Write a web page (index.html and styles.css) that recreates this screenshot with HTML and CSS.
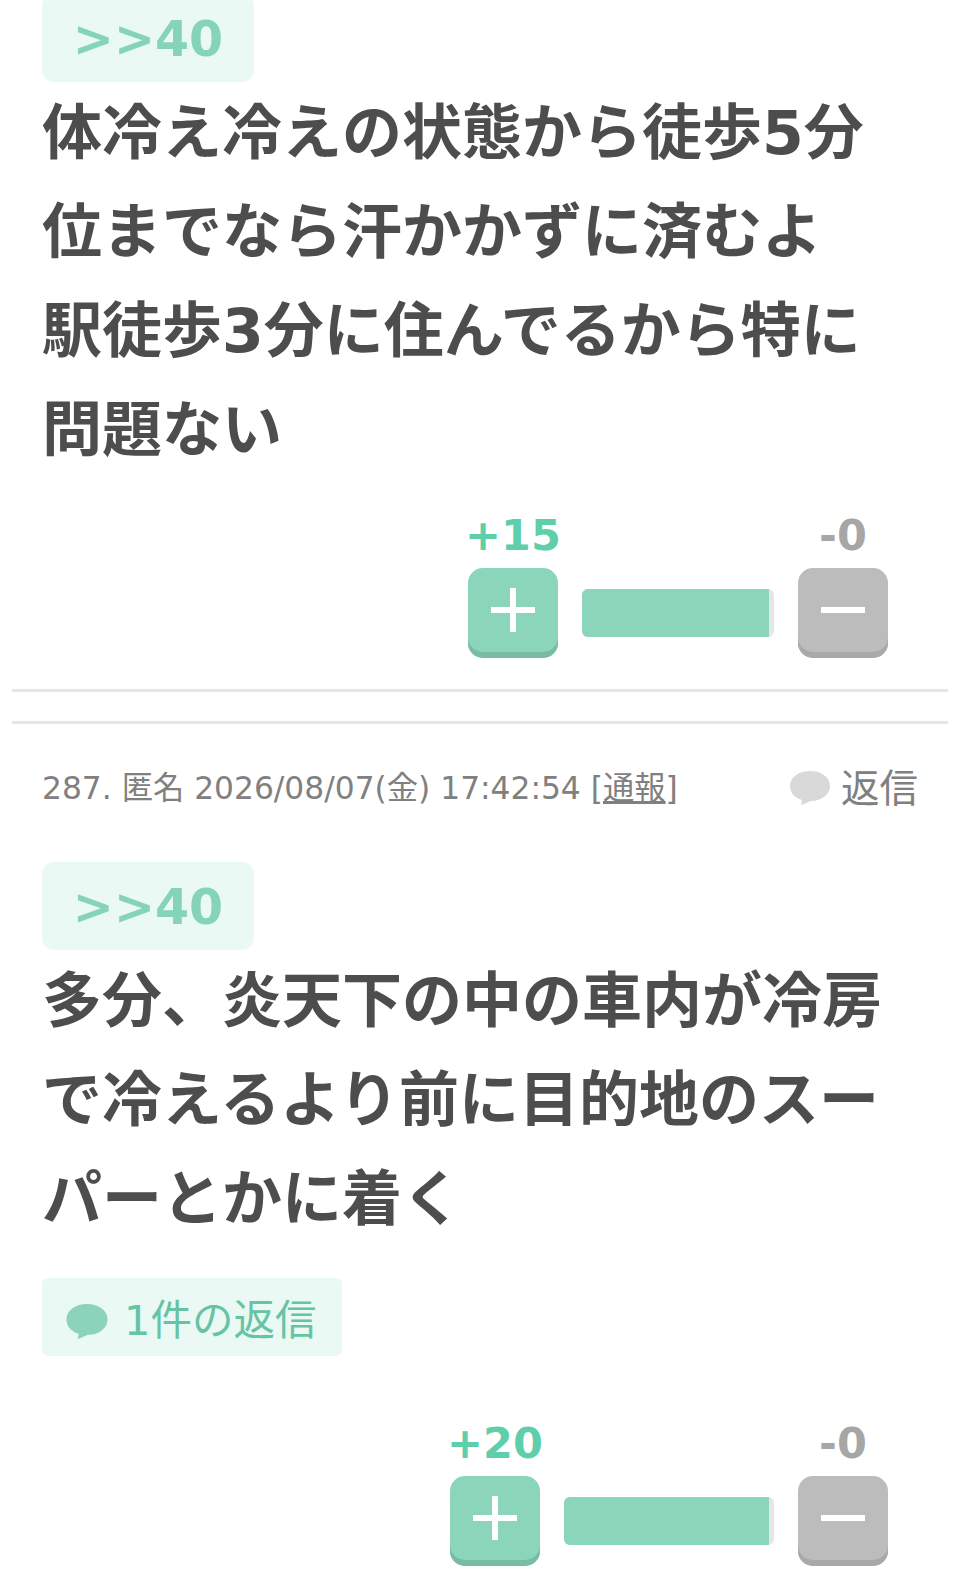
FILE: index.html
```html
<!DOCTYPE html>
<html lang="ja">
<head>
  <meta charset="UTF-8" />
  <meta name="viewport" content="width=device-width, initial-scale=1" />
  <title>コメント</title>
  <link rel="stylesheet" href="styles.css">
</head>
<body>

  <div class="comments">
    <article class="comment comment-cut">
      <a class="anchor">&gt;&gt;40</a>
      <p class="text">体冷え冷えの状態から徒歩5分位までなら汗かかずに済むよ<br>駅徒歩3分に住んでるから特に問題ない</p>
      <div class="vote vote-first">
        <div class="vote-col">
          <span class="count count-plus">+15</span>
          <button class="vote-btn vote-plus" type="button" aria-label="plus">
            <svg width="44" height="44" viewBox="0 0 44 44"><path d="M22 0v44M0 22h44" stroke="#fff" stroke-width="6" fill="none"/></svg>
          </button>
        </div>
        <div class="bar bar-first"><div class="bar-fill"></div></div>
        <div class="vote-col">
          <span class="count count-minus">-0</span>
          <button class="vote-btn vote-minus" type="button" aria-label="minus">
            <svg width="44" height="44" viewBox="0 0 44 44"><path d="M0 22h44" stroke="#fff" stroke-width="6" fill="none"/></svg>
          </button>
        </div>
      </div>
    </article>

    <article class="comment">
      <div class="meta">
        <span>287. 匿名 2026/08/07(金) 17:42:54 [<a class="report">通報</a>]</span>
        <a class="reply">
          <svg width="40" height="36" viewBox="0 0 40 36"><path d="M20 1C9 1 0 7 0 16c0 7 5 12 12 14l-1 5c4-1 7-3 10-4 11 0 19-7 19-15C40 7 31 1 20 1z" fill="#d9d9d9"/></svg>
          返信
        </a>
      </div>
      <a class="anchor">&gt;&gt;40</a>
      <p class="text">多分、炎天下の中の車内が冷房で冷えるより前に目的地のスーパーとかに着く</p>
      <a class="replies">
        <svg width="42" height="37" viewBox="0 0 40 36"><path d="M20 1C9 1 0 7 0 16c0 7 5 12 12 14l-1 5c4-1 7-3 10-4 11 0 19-7 19-15C40 7 31 1 20 1z" fill="#8bd3ba"/></svg>
        1件の返信
      </a>
      <div class="vote vote-second">
        <div class="vote-col">
          <span class="count count-plus">+20</span>
          <button class="vote-btn vote-plus" type="button" aria-label="plus">
            <svg width="44" height="44" viewBox="0 0 44 44"><path d="M22 0v44M0 22h44" stroke="#fff" stroke-width="6" fill="none"/></svg>
          </button>
        </div>
        <div class="bar bar-second"><div class="bar-fill"></div></div>
        <div class="vote-col">
          <span class="count count-minus">-0</span>
          <button class="vote-btn vote-minus" type="button" aria-label="minus">
            <svg width="44" height="44" viewBox="0 0 44 44"><path d="M0 22h44" stroke="#fff" stroke-width="6" fill="none"/></svg>
          </button>
        </div>
      </div>
    </article>
  </div>

</body>
</html>
```

FILE: styles.css
```css
html, body {
  height: 1570px;
  overflow: hidden;
}
body {
  background: #fff;
  color: #4d4d4d;
  font-family: "DejaVu Sans", "Noto Sans CJK JP", sans-serif;
  margin: 0;
}
.comments {
  margin: -6px 12px 0;
}
.comment {
  padding: 0 30px;
}
.comment-cut {
  border-bottom: 3px solid #e6e6e6;
  padding-bottom: 31px;
  margin-bottom: 29px;
}
.comment + .comment {
  border-top: 3px solid #e6e6e6;
  padding-top: 28px;
}
.anchor {
  display: block;
  width: 212px;
  height: 88px;
  padding-top: 4px;
  line-height: 84px;
  box-sizing: border-box;
  text-align: center;
  background: #ebf9f5;
  border-radius: 12px;
  color: #85d3ba;
  font-size: 49px;
  font-weight: 700;
}
.text {
  margin: 2px 0 0;
  font-size: 60px;
  line-height: 99px;
  font-weight: 700;
  color: #4d4d4d;
  width: 876px;
}
.meta {
  display: flex;
  justify-content: space-between;
  align-items: center;
  height: 66px;
  margin-bottom: 44px;
  font-size: 31.3px;
  color: #808080;
}
.report {
  text-decoration: underline;
}
.reply {
  display: flex;
  align-items: center;
  gap: 11px;
  font-size: 38.5px;
}
.reply svg {
  margin-top: 6px;
}
.replies {
  display: flex;
  align-items: center;
  gap: 16px;
  width: 300px;
  height: 78px;
  box-sizing: border-box;
  padding-left: 24px;
  margin-top: 29px;
  background: #ebf9f5;
  border-radius: 6px;
  color: #66c4a5;
  font-size: 41.5px;
}
.replies svg {
  margin-top: 8px;
}
.vote {
  display: flex;
  justify-content: flex-end;
  align-items: flex-end;
  gap: 24px;
  margin-right: 30px;
}
.vote-first {
  margin-top: 30px;
}
.vote-second {
  margin-top: 62px;
}
.vote-col {
  display: flex;
  flex-direction: column;
  align-items: center;
  width: 90px;
}
.count {
  font-size: 43px;
  font-weight: 700;
  line-height: 50px;
  margin-bottom: 8px;
  white-space: nowrap;
}
.count-plus {
  color: #5fcfab;
}
.count-minus {
  color: #a6a6a6;
}
.vote-btn {
  display: flex;
  align-items: center;
  justify-content: center;
  width: 90px;
  height: 90px;
  padding: 0 0 6px;
  border: none;
  border-radius: 15px;
}
.vote-plus {
  background: #8bd5bb;
  box-shadow: inset 0 -6px 0 #78bca4;
}
.vote-minus {
  background: #bcbcbc;
  box-shadow: inset 0 -6px 0 #a9a9a9;
}
.bar {
  height: 48px;
  margin-bottom: 21px;
  background: #e6e6e6;
  border-radius: 6px;
  overflow: hidden;
}
.bar-first {
  width: 192px;
}
.bar-second {
  width: 210px;
}
.bar-fill {
  height: 100%;
  margin-right: 5px;
  background: #8bd5bb;
}
```
